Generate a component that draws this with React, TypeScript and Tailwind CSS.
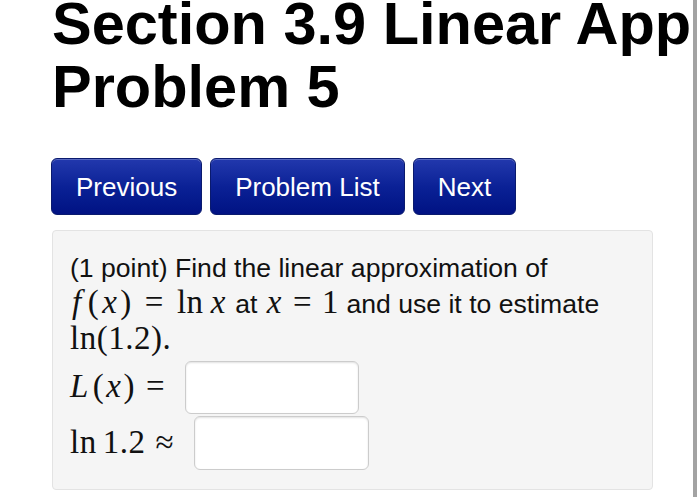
import React from "react";

const sans = { fontFamily: '"Liberation Sans", Arial, Helvetica, sans-serif' };
const serif = { fontFamily: '"Liberation Serif", "Times New Roman", serif' };

function NavButton({ label }: { label: string }) {
  return (
    <button
      className="h-[57px] px-[24px] rounded-[6px] border border-[#0a1a6e] bg-gradient-to-b from-[#2238ad] via-[#0b2196] to-[#011283] text-white text-[26px] leading-none shadow-[inset_0_1px_0_rgba(255,255,255,0.25)]"
      style={sans}
    >
      {label}
    </button>
  );
}

function Mi({ children, className = "" }: { children: React.ReactNode; className?: string }) {
  return <i className={`italic ${className}`}>{children}</i>;
}

// relation symbol with TeX-style thick spacing
function Rel({ children, className = "mx-[11px]" }: { children: React.ReactNode; className?: string }) {
  return <span className={className}>{children}</span>;
}

function Math({ children }: { children: React.ReactNode }) {
  return (
    <span className="text-[33px] leading-none tracking-[0.5px] whitespace-nowrap" style={serif}>
      {children}
    </span>
  );
}

function AnswerBox({ className }: { className: string }) {
  return (
    <input
      type="text"
      className={`bg-white border border-[#cccccc] rounded-[6px] shadow-[inset_0_1px_2px_rgba(0,0,0,0.12)] outline-none ${className}`}
    />
  );
}

export default function App() {
  return (
    <div className="w-[700px] h-[497px] bg-white flex overflow-hidden">
      <div className="w-[693px] h-full overflow-hidden shrink-0 pl-[52px]" style={sans}>
        <h1 className="-mt-[8px] text-[59.5px] leading-[63px] font-bold text-black whitespace-nowrap">
          Section 3.9 Linear Approximation
          <br />
          Problem 5
        </h1>

        <div className="mt-[40px] flex gap-[8px] -ml-[1px]">
          <NavButton label="Previous" />
          <NavButton label="Problem List" />
          <NavButton label="Next" />
        </div>

        <div className="mt-[15px] w-[601px] bg-[#f5f5f5] border border-[#e3e3e3] rounded-[4px] p-[19px] pl-[17px] text-[26.6px] leading-[36px] text-[#111]">
          <div>(1 point) Find the linear approximation of</div>
          <div>
            <Math>
              <Mi className="pl-[2px] pr-[6px]">f</Mi>(<Mi className="px-[3px]">x</Mi>)
              <Rel className="ml-[13px] mr-[13px]">=</Rel>ln
              <Mi className="pl-[7px] pr-[2px]">x</Mi>
            </Math>{" "}
            at{" "}
            <Math>
              <Mi className="px-[2px]">x</Mi>
              <Rel className="ml-[9px] mr-[10px]">=</Rel>1
            </Math>{" "}
            and use it to estimate
          </div>
          <div>
            <Math>ln(1.2).</Math>
          </div>
          <div className="flex items-center">
            <Math>
              <Mi className="pr-[4px]">L</Mi>(<Mi className="px-[2px]">x</Mi>)<span className="ml-[11px]">=</span>
            </Math>
            <AnswerBox className="ml-[20px] mt-[3px] w-[174px] h-[53px]" />
          </div>
          <div className="flex items-center">
            <Math>
              ln<span className="ml-[6px]">1.2</span>
              <span className="ml-[10px]">≈</span>
            </Math>
            <AnswerBox className="ml-[20px] mt-[2px] w-[175px] h-[54px]" />
          </div>
        </div>
      </div>
      <div className="w-[4px] h-full bg-[#a3a3a3] shrink-0" />
    </div>
  );
}
